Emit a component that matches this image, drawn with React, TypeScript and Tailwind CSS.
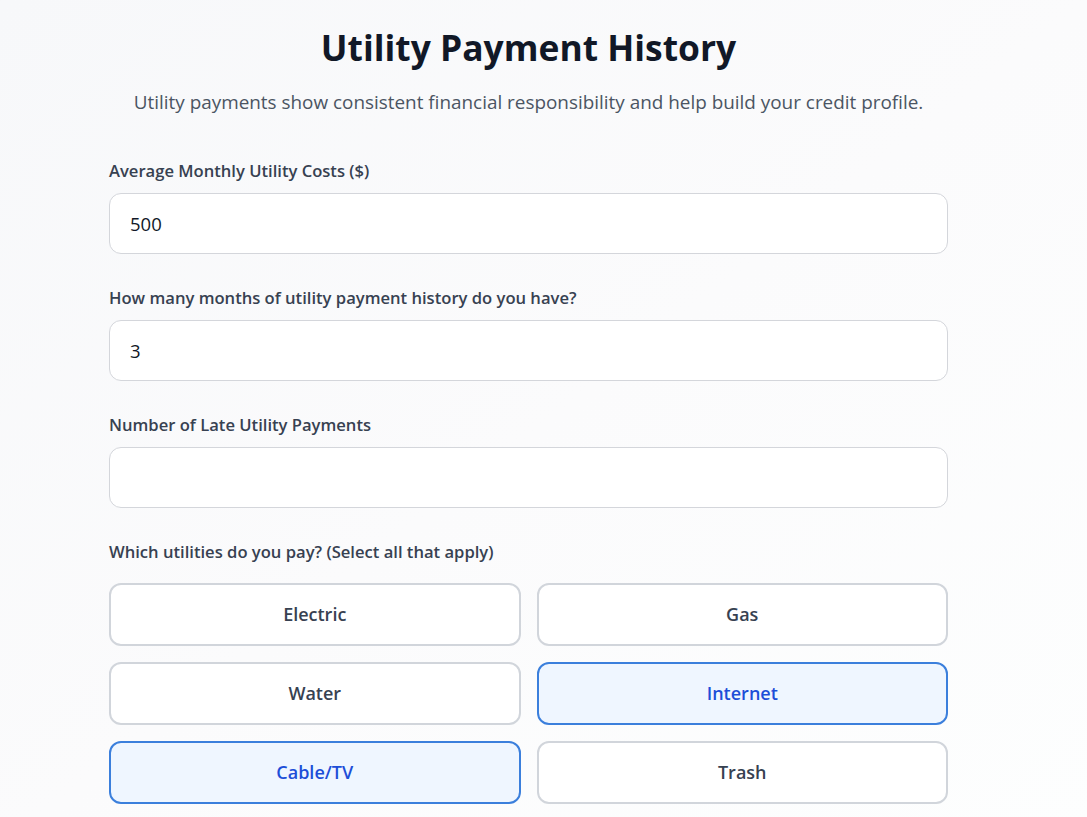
import { useState } from "react";

const utilities = ["Electric", "Gas", "Water", "Internet", "Cable/TV", "Trash"];

const labelCls = "block text-[16.6px] leading-[24px] font-semibold text-[#374151]";
const inputCls =
  "w-full h-[61px] px-5 rounded-xl border border-[#d4d6db] bg-white text-[18.5px] text-[#111827] focus:outline-none";

export default function App() {
  const [avgCost, setAvgCost] = useState("500");
  const [months, setMonths] = useState("3");
  const [late, setLate] = useState("");
  const [selected, setSelected] = useState<string[]>(["Internet", "Cable/TV"]);

  const toggle = (u: string) => {
    setSelected(prev => (prev.includes(u) ? prev.filter(x => x !== u) : [...prev, u]));
  };

  return (
    <div
      className="min-h-screen bg-gradient-to-br from-[#f7f8fa] via-[#fbfbfc] to-[#fdfefe] pr-[30px]"
      style={{ fontFamily: '"Open Sans", "Noto Sans", sans-serif' }}
    >
      <div className="mx-auto w-[839px] pt-[27px] pb-10">
        {/* Header */}
        <h1 className="text-center text-[35.4px] leading-[40px] font-bold text-[#111827]">
          Utility Payment History
        </h1>
        <p className="mt-[21px] text-center text-[18.9px] leading-[28px] text-[#4b5563]">
          Utility payments show consistent financial responsibility and help build your credit profile.
        </p>

        {/* Inputs */}
        <div className="mt-[43px] flex flex-col gap-[32px]">
          <div>
            <label className={labelCls + " mb-[10px]"}>Average Monthly Utility Costs ($)</label>
            <input type="text" value={avgCost} onChange={e => setAvgCost(e.target.value)} className={inputCls} />
          </div>
          <div>
            <label className={labelCls + " mb-[10px]"}>
              How many months of utility payment history do you have?
            </label>
            <input type="text" value={months} onChange={e => setMonths(e.target.value)} className={inputCls} />
          </div>
          <div>
            <label className={labelCls + " mb-[10px]"}>Number of Late Utility Payments</label>
            <input type="text" value={late} onChange={e => setLate(e.target.value)} className={inputCls} />
          </div>

          {/* Utility types */}
          <div>
            <label className={labelCls + " mb-[19px]"}>Which utilities do you pay? (Select all that apply)</label>
            <div className="grid grid-cols-2 gap-x-[16px] gap-y-[16px]">
              {utilities.map(u => {
                const on = selected.includes(u);
                return (
                  <button
                    key={u}
                    onClick={() => toggle(u)}
                    className={
                      on
                        ? "h-[63px] rounded-xl border-2 border-[#3b7fdc] bg-[#eff6ff] text-[18px] font-semibold text-[#1d4ed8]"
                        : "h-[63px] rounded-xl border-2 border-[#d1d5db] bg-white text-[18px] font-semibold text-[#374151]"
                    }
                  >
                    {u}
                  </button>
                );
              })}
            </div>
          </div>
        </div>
      </div>
    </div>
  );
}
